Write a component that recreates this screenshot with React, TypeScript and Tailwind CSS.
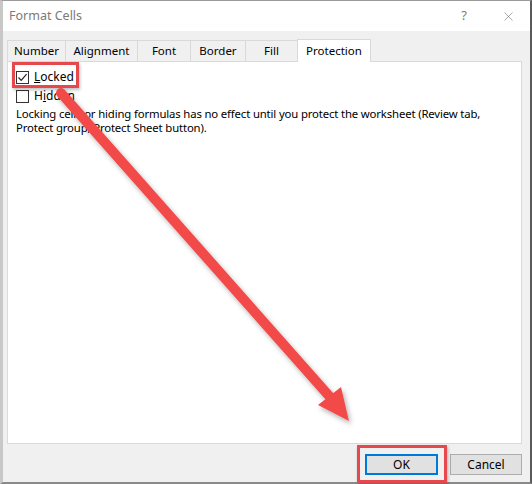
import { X } from 'lucide-react'

const tabs = ['Number', 'Alignment', 'Font', 'Border', 'Fill']

const CheckBox = ({ checked }: { checked: boolean }) => (
  <span className="w-[13px] h-[13px] border border-[#333] bg-white flex items-center justify-center">
    {checked && (
      <svg width="11" height="11" viewBox="0 0 11 11">
        <path d="M1.5 5.5 L4.2 8.3 L9.6 2.2" fill="none" stroke="#222" strokeWidth="1.2" />
      </svg>
    )}
  </span>
)

const App = () => {
  return (
    <div className="relative w-[532px] h-[484px] overflow-hidden bg-[#f0f0f0] text-[12px] text-black font-['Noto_Sans','Liberation_Sans',sans-serif]">
      <div className="w-full h-full flex flex-col border-l-[3px] border-r-2 border-t border-b-2 border-l-[#c8c8c8] border-r-[#5a5a5a] border-t-[#9a9a9a] border-b-[#8a8a8a]">
        <header className="h-[30px] bg-white flex items-center justify-between pl-[6px] pr-[14px] text-[#7a7a7a]">
          <span className="text-[12.5px]">Format Cells</span>
          <div className="flex items-center gap-[34px]">
            <span className="text-[13px]">?</span>
            <X size={15} strokeWidth={1} color="#777" />
          </div>
        </header>
        <div className="flex-1 flex flex-col pl-[4px] pr-[8px] pt-[7px]">
          <nav className="flex items-end h-[23px]">
            {tabs.map((t) => (
              <div
                key={t}
                className="h-[21px] px-[8px] flex items-center justify-center border-t border-l border-[#d9d9d9] bg-[#f0f0f0] text-[11.5px]"
                style={{
                  width: { Number: 58, Alignment: 72, Font: 53, Border: 55, Fill: 52 }[t],
                }}
              >
                {t}
              </div>
            ))}
            <div className="h-[23px] w-[74px] flex items-center justify-center border-t border-l border-r border-[#d9d9d9] bg-white text-[11.5px] -mb-px relative z-10">
              Protection
            </div>
          </nav>
          <section className="h-[383px] bg-white border border-[#d9d9d9] pl-[8px] pt-[8px] flex flex-col">
            <label className="flex items-center gap-[5px] h-[14px]">
              <CheckBox checked />
              <span>
                <span className="underline">L</span>ocked
              </span>
            </label>
            <label className="flex items-center gap-[5px] h-[14px] mt-[5px]">
              <CheckBox checked={false} />
              <span>
                H<span className="underline">i</span>dden
              </span>
            </label>
            <p className="mt-[4px] leading-[13.5px] text-[11.35px] tracking-[-0.15px]">
              Locking cells or hiding formulas has no effect until you protect the worksheet (Review tab,
              <br />
              Protect group, Protect Sheet button).
            </p>
          </section>
          <footer className="flex justify-end gap-[12px] pt-[10px] pr-0">
            <button className="w-[73px] h-[21px] bg-[#e1e1e1] border-2 border-[#0078d7] text-[12px]">OK</button>
            <button className="w-[72px] h-[21px] bg-[#e1e1e1] border border-[#adadad] text-[12px]">Cancel</button>
          </footer>
        </div>
      </div>

      {/* annotation overlays */}
      <div className="absolute left-[12px] top-[62px] w-[67px] h-[26px] border-[3px] border-[#e5484d] shadow-[1px_2px_3px_rgba(0,0,0,0.25)]" />
      <div className="absolute left-[357px] top-[445px] w-[90px] h-[38px] border-[3px] border-[#e5484d] shadow-[1px_2px_3px_rgba(0,0,0,0.25)]" />
      <svg className="absolute left-0 top-0 pointer-events-none" width="532" height="484">
        <defs>
          <filter id="sh" x="-10%" y="-10%" width="130%" height="130%">
            <feDropShadow dx="2" dy="3" stdDeviation="2.5" floodColor="#000" floodOpacity="0.3" />
          </filter>
        </defs>
        <g filter="url(#sh)" fill="#f24a4a">
          <line x1="61" y1="93" x2="330" y2="397" stroke="#f24a4a" strokeWidth="10" strokeLinecap="round" />
          <polygon points="318,405 341,387 349,421" />
        </g>
      </svg>
    </div>
  )
}

export default App
